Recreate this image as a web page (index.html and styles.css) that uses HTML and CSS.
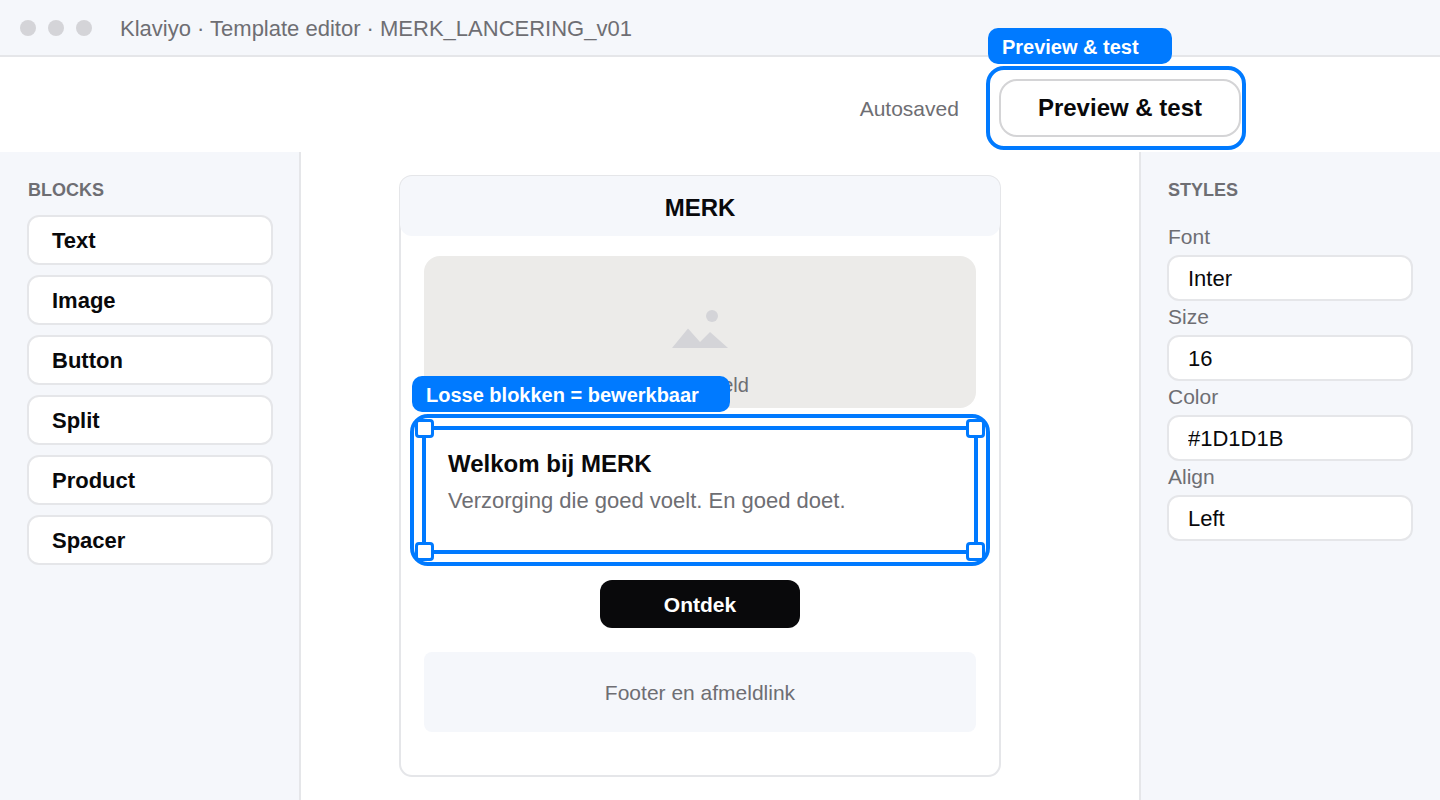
FILE: index.html
```html
<!DOCTYPE html>
<html lang="nl">
<head>
    <meta charset="UTF-8">
    <meta name="viewport" content="width=device-width, initial-scale=1.0">
    <title>Klaviyo · Template editor</title>
    <link rel="stylesheet" href="styles.css">
</head>
<body>
    <header class="titlebar">
        <span class="dot"></span>
        <span class="dot"></span>
        <span class="dot"></span>
        <span class="titlebar-text">Klaviyo · Template editor · MERK_LANCERING_v01</span>
    </header>

    <div class="toolbar">
        <span class="autosaved">Autosaved</span>
        <div class="callout callout-preview">
            <span class="callout-label">Preview &amp; test</span>
            <button class="preview-button" type="button">Preview &amp; test</button>
        </div>
    </div>

    <div class="editor">
        <aside class="panel panel-left">
            <h2 class="panel-title">BLOCKS</h2>
            <div class="block-list">
                <button class="block-button" type="button">Text</button>
                <button class="block-button" type="button">Image</button>
                <button class="block-button" type="button">Button</button>
                <button class="block-button" type="button">Split</button>
                <button class="block-button" type="button">Product</button>
                <button class="block-button" type="button">Spacer</button>
            </div>
        </aside>

        <main class="canvas">
            <div class="email">
                <div class="email-header">MERK</div>
                <div class="email-body">
                    <div class="image-block">
                        <svg class="image-icon" width="56" height="38" viewBox="0 0 56 38" aria-hidden="true">
                            <circle cx="40" cy="6" r="6"/>
                            <path d="M0 38 L16 18.5 L28 32 L38 22 L56 38 Z"/>
                        </svg>
                        <span>Hero beeld</span>
                    </div>

                    <div class="callout callout-block">
                        <span class="callout-label">Losse blokken = bewerkbaar</span>
                        <div class="text-block">
                            <h1>Welkom bij MERK</h1>
                            <p>Verzorging die goed voelt. En goed doet.</p>
                            <span class="handle top-left"></span>
                            <span class="handle top-right"></span>
                            <span class="handle bottom-left"></span>
                            <span class="handle bottom-right"></span>
                        </div>
                    </div>

                    <button class="email-button" type="button">Ontdek</button>
                    <div class="email-footer">Footer en afmeldlink</div>
                </div>
            </div>
        </main>

        <aside class="panel panel-right">
            <h2 class="panel-title">STYLES</h2>
            <form class="style-form">
                <label for="font">Font</label>
                <input type="text" id="font" value="Inter">
                <label for="size">Size</label>
                <input type="text" id="size" value="16">
                <label for="color">Color</label>
                <input type="text" id="color" value="#1D1D1B">
                <label for="align">Align</label>
                <input type="text" id="align" value="Left">
            </form>
        </aside>
    </div>
</body>
</html>
```
FILE: styles.css
```css
* {
    box-sizing: border-box;
}

body {
    font-family: "Liberation Sans", Arial, sans-serif;
    font-size: 22px;
    background-color: #ffffff;
    color: #09090b;
    margin: 0;
    min-height: 100vh;
    display: flex;
    flex-direction: column;
}

button,
input {
    font-family: inherit;
    color: inherit;
}

button {
    cursor: pointer;
}

/* Top bars */
.titlebar {
    display: flex;
    align-items: center;
    gap: 12px;
    min-height: 57px;
    padding: 0 20px;
    background-color: #f5f7fb;
    border-bottom: 2px solid #e5e6e9;
}

.dot {
    width: 16px;
    height: 16px;
    border-radius: 50%;
    background-color: #d4d4d8;
}

.titlebar-text {
    margin-left: 16px;
    padding-top: 2px;
    color: #6e6e73;
}

.toolbar {
    display: flex;
    align-items: center;
    justify-content: flex-end;
    gap: 27px;
    padding: 9px 194px 2px 20px;
}

.autosaved {
    padding-top: 2px;
    font-size: 21px;
    color: #6e6e73;
}

.preview-button {
    padding: 12px 37px;
    background-color: #ffffff;
    border: 2px solid #d4d4d6;
    border-radius: 18px;
    font-size: 24px;
    font-weight: bold;
    line-height: 30px;
}

/* Blue highlight with its label */
.callout {
    position: relative;
    border: 4px solid #007aff;
    border-radius: 18px;
}

.callout-label {
    position: absolute;
    left: -2px;
    bottom: 100%;
    margin-bottom: 6px;
    padding: 2px 31px 0 14px;
    background-color: #007aff;
    border-radius: 10px;
    color: #ffffff;
    font-size: 20px;
    font-weight: bold;
    line-height: 34px;
    white-space: nowrap;
}

.callout-preview {
    padding: 9px 1px 9px 9px;
}

.callout-preview .callout-label {
    padding-right: 33px;
}

.callout-block {
    margin: 6px -14px 14px;
    padding: 8px;
}

/* Side panels */
.editor {
    flex: 1;
    display: flex;
}

.panel {
    flex: 0 0 301px;
    padding: 26px;
    background-color: #f5f7fb;
}

.panel-left {
    padding-left: 27px;
    border-right: 2px solid #e5e6e9;
}

.panel-right {
    padding-right: 27px;
    border-left: 2px solid #e5e6e9;
}

.panel-title {
    margin: 0;
    padding-left: 1px;
    color: #6e6e73;
    font-size: 18px;
    line-height: 24px;
}

.block-list {
    display: flex;
    flex-direction: column;
    gap: 10px;
    margin-top: 13px;
}

.block-button {
    padding: 9px 23px 7px;
    background-color: #ffffff;
    border: 2px solid #e5e6e9;
    border-radius: 12px;
    font-size: 22px;
    font-weight: bold;
    line-height: 30px;
    text-align: left;
}

.style-form {
    display: flex;
    flex-direction: column;
    margin-top: 19px;
}

.style-form label {
    padding: 0 0 2px 1px;
    color: #6e6e73;
    font-size: 21px;
    line-height: 32px;
}

.style-form input {
    width: 100%;
    height: 46px;
    padding: 2px 19px 0;
    background-color: #ffffff;
    border: 2px solid #e5e6e9;
    border-radius: 12px;
    font-size: 22px;
}

/* Email preview */
.canvas {
    flex: 1;
    padding: 23px 138px 23px 98px;
}

.email {
    border: 2px solid #e5e6e9;
    border-radius: 13px;
}

.email-header {
    margin: -1px -1px 0;
    padding: 18px 16px 14px;
    background-color: #f5f7fb;
    border-radius: 12px;
    font-size: 24px;
    font-weight: bold;
    line-height: 28px;
    text-align: center;
}

.email-body {
    display: flex;
    flex-direction: column;
    padding: 20px 23px 43px;
}

.image-block {
    display: flex;
    flex-direction: column;
    align-items: center;
    gap: 23px;
    padding: 54px 20px 9px;
    background-color: #ecebe9;
    border-radius: 16px;
    color: #6e6e73;
    font-size: 20px;
    line-height: 28px;
}

.image-icon {
    fill: #d4d4d8;
}

.text-block {
    position: relative;
    padding: 18px 22px 33px;
    border: 4px solid #007aff;
}

.text-block h1 {
    margin: 0 0 5px;
    font-size: 24px;
    line-height: 32px;
}

.text-block p {
    margin: 0;
    color: #6e6e73;
    line-height: 32px;
}

.handle {
    position: absolute;
    width: 19px;
    height: 19px;
    background-color: #ffffff;
    border: 3px solid #007aff;
    border-radius: 4px;
}

.top-left,
.top-right {
    top: -11px;
}

.bottom-left,
.bottom-right {
    bottom: -11px;
}

.top-left,
.bottom-left {
    left: -11px;
}

.top-right,
.bottom-right {
    right: -11px;
}

.email-button {
    align-self: center;
    padding: 10px 64px 8px;
    background-color: #09090b;
    border: none;
    border-radius: 12px;
    color: #ffffff;
    font-size: 21px;
    font-weight: bold;
    line-height: 30px;
}

.email-footer {
    margin-top: 24px;
    padding: 26px 25px 24px;
    background-color: #f5f7fb;
    border-radius: 8px;
    color: #6e6e73;
    font-size: 21px;
    line-height: 30px;
    text-align: center;
}
```
